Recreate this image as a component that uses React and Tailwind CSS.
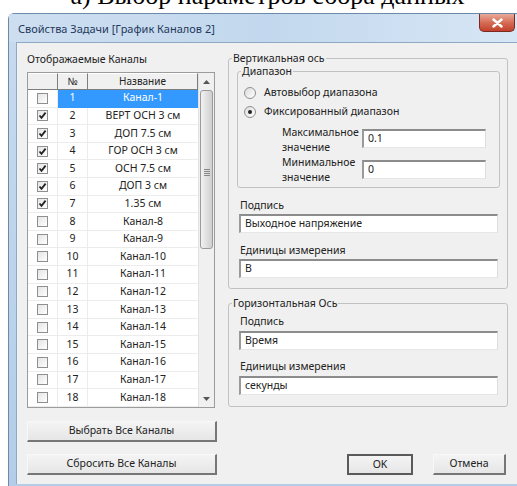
import { useState } from 'react'

const channels = [
  { n: 1, name: 'Канал-1', on: false },
  { n: 2, name: 'ВЕРТ ОСН 3 см', on: true },
  { n: 3, name: 'ДОП 7.5 см', on: true },
  { n: 4, name: 'ГОР ОСН 3 см', on: true },
  { n: 5, name: 'ОСН 7.5 см', on: true },
  { n: 6, name: 'ДОП 3 см', on: true },
  { n: 7, name: '1.35 см', on: true },
  { n: 8, name: 'Канал-8', on: false },
  { n: 9, name: 'Канал-9', on: false },
  { n: 10, name: 'Канал-10', on: false },
  { n: 11, name: 'Канал-11', on: false },
  { n: 12, name: 'Канал-12', on: false },
  { n: 13, name: 'Канал-13', on: false },
  { n: 14, name: 'Канал-14', on: false },
  { n: 15, name: 'Канал-15', on: false },
  { n: 16, name: 'Канал-16', on: false },
  { n: 17, name: 'Канал-17', on: false },
  { n: 18, name: 'Канал-18', on: false },
]

function CheckBox({ checked }) {
  return (
    <div className="w-[11px] h-[11px] border border-[#8f8f8f] bg-gradient-to-br from-[#e4e4e4] to-white flex items-center justify-center">
      {checked && (
        <svg width="9" height="9" viewBox="0 0 9 9">
          <path d="M1.5 4.5 L3.5 6.8 L7.6 1.6" stroke="#222" strokeWidth="1.8" fill="none" />
        </svg>
      )}
    </div>
  )
}

function Radio({ checked }) {
  return (
    <div className="w-[12px] h-[12px] rounded-full border border-[#8e8f8f] bg-gradient-to-br from-[#dcdcdc] to-white flex items-center justify-center">
      {checked && <div className="w-[4px] h-[4px] rounded-full bg-[#222]" />}
    </div>
  )
}

function TextBox({ value, className = '' }) {
  return (
    <div
      className={
        'h-[19px] bg-white border-t-2 border-l-2 border-t-[#8c8c8c] border-l-[#9a9a9a] border-r border-b border-r-[#dedede] border-b-[#e6e6e6] flex items-center pl-[4px] text-[10.5px] text-[#222] ' +
        className
      }
    >
      {value}
    </div>
  )
}

function Button({ children, className = '', strong = false }) {
  return (
    <div
      className={
        'h-[21px] flex items-center justify-center text-[10.5px] text-[#222] bg-gradient-to-b from-[#f4f4f4] to-[#e6e6e6] ' +
        (strong
          ? 'border-2 border-[#5a5a5a] '
          : 'border border-t-[#f8f8f8] border-l-[#f8f8f8] border-r-2 border-b-2 border-r-[#767676] border-b-[#767676] ') +
        className
      }
    >
      {children}
    </div>
  )
}

function Arrow({ up }) {
  return (
    <svg width="7" height="4" viewBox="0 0 7 4">
      <path d={up ? 'M0 4 L3.5 0 L7 4 Z' : 'M0 0 L3.5 4 L7 0 Z'} fill="#555" />
    </svg>
  )
}

function ChannelGrid() {
  const [selected] = useState(1)
  return (
    <div className="w-[188px] h-[336px] border border-[#9c9c9c] bg-white flex">
      <div className="flex-1 flex flex-col overflow-hidden">
        <div className="h-[17px] flex shrink-0 bg-[#f0f0f0] text-[10px] text-[#222]">
          <div className="w-[30px] border-r border-b border-[#7d7d7d] border-t border-t-white" />
          <div className="w-[30px] border-r border-b border-[#7d7d7d] border-t border-t-white flex items-center justify-center">№</div>
          <div className="flex-1 border-r border-b border-[#7d7d7d] border-t border-t-white flex items-center justify-center">Название</div>
        </div>
        {channels.map(c => {
          const sel = c.n === selected
          return (
            <div key={c.n} className="h-[17.6px] flex shrink-0 text-[10.5px] text-[#222]">
              <div className="w-[30px] border-r border-b border-[#ececec] flex items-center justify-center">
                <CheckBox checked={c.on} />
              </div>
              <div
                className={
                  'w-[30px] border-r border-b flex items-center justify-center ' +
                  (sel ? 'bg-[#3399ff] text-white border-[#3399ff]' : 'border-[#ececec]')
                }
              >
                {c.n}
              </div>
              <div
                className={
                  'flex-1 border-b flex items-center justify-center ' +
                  (sel ? 'bg-[#3399ff] text-white border-[#3399ff]' : 'border-[#ececec]')
                }
              >
                {c.name}
              </div>
            </div>
          )
        })}
      </div>
      {/* vertical scroll bar */}
      <div className="w-[16px] flex flex-col bg-[#f0f0f0] border-l border-[#e2e2e2]">
        <div className="h-[17px] flex items-center justify-center shrink-0">
          <Arrow up />
        </div>
        <div className="flex-1 flex flex-col px-[1px]">
          <div className="h-[159px] rounded-[3px] border border-[#9a9a9a] bg-gradient-to-r from-[#f2f2f2] via-[#e0e0e0] to-[#cfcfcf] flex flex-col items-center justify-end pb-[72px] gap-[1px]">
            <div className="w-[6px] h-[1px] bg-[#888]" />
            <div className="w-[6px] h-[1px] bg-[#888]" />
            <div className="w-[6px] h-[1px] bg-[#888]" />
            <div className="w-[6px] h-[1px] bg-[#888]" />
          </div>
        </div>
        <div className="h-[17px] flex items-center justify-center shrink-0">
          <Arrow />
        </div>
      </div>
    </div>
  )
}

function App() {
  return (
    <div className="w-[517px] h-[486px] bg-white overflow-hidden flex flex-col font-['Noto_Sans',sans-serif]">
      {/* figure caption, cut at the top */}
      <div className="h-[13px] shrink-0 overflow-hidden flex items-end justify-center pl-[18px]">
        <span className="font-['Liberation_Serif',serif] text-[26px] leading-[26px] mb-[4px] text-black whitespace-nowrap">
          а) Выбор параметров сбора данных
        </span>
      </div>

      {/* dialog window */}
      <div className="ml-[8px] w-[520px] flex-1 flex flex-col rounded-tl-[6px] border-l border-t border-[#6d89a8] bg-gradient-to-b from-[#c7dbef] to-[#b3cde8]">
        <div className="h-[28px] shrink-0 flex items-start justify-between bg-gradient-to-r from-[#cddef0] via-[#c3d8ee] to-[#d8e7f5]">
          <div className="pl-[9px] pt-[7px] text-[11px] text-[#1e395b] whitespace-nowrap">
            Свойства Задачи [График Каналов 2]
          </div>
          <div className="mr-[13px] w-[36px] h-[18px] rounded-b-[5px] border border-t-0 border-[#7a2a20] bg-gradient-to-b from-[#e8aa9b] via-[#d56c55] to-[#c2402a] flex items-center justify-center">
            <svg width="11" height="10" viewBox="0 0 11 10">
              <path d="M1.5 1.5 L9.5 8.5 M9.5 1.5 L1.5 8.5" stroke="white" strokeWidth="2.4" strokeLinecap="round" />
            </svg>
          </div>
        </div>

        <div className="flex-1 ml-[7px] mb-[2px] border-l border-t border-[#8fa9c4] bg-[#f0f0f0] flex text-[#222]">
          {/* left column: channels */}
          <div className="w-[190px] ml-[10px] pt-[10px] flex flex-col">
            <div className="h-[17px] text-[10.5px] leading-[12px]">Отображаемые Каналы</div>
            <div className="mt-[2px]">
              <ChannelGrid />
            </div>
            <Button className="mt-[13px]">Выбрать Все Каналы</Button>
            <Button className="mt-[12px]">Сбросить Все Каналы</Button>
          </div>

          {/* right column: axes */}
          <div className="w-[280px] ml-[11px] pt-[8px] flex flex-col">
            <fieldset className="border border-[#c2c2c2] rounded-[3px] pb-[10px]">
              <legend className="ml-[3px] px-[1px] text-[10.5px] leading-[14px]">Вертикальная ось</legend>
              <fieldset className="ml-[8px] mr-[7px] border border-[#c2c2c2] rounded-[3px] pb-[8px]">
                <legend className="ml-[3px] px-[1px] text-[10.5px] leading-[12px]">Диапазон</legend>
                <div className="pl-[6px] pt-[7px] flex items-center gap-[8px] h-[25px] text-[10.5px]">
                  <Radio />
                  <span>Автовыбор диапазона</span>
                </div>
                <div className="pl-[6px] mt-[1px] flex items-center gap-[8px] h-[18px] text-[10.5px]">
                  <Radio checked />
                  <span>Фиксированный диапазон</span>
                </div>
                <div className="mt-[8px] h-[19px] flex items-start">
                  <div className="ml-[44px] w-[80px] -mt-[4px] text-[10.5px] leading-[15px]">
                    Максимальное
                    <br />
                    значение
                  </div>
                  <TextBox value="0.1" className="w-[124px]" />
                </div>
                <div className="mt-[12px] h-[19px] flex items-start">
                  <div className="ml-[44px] w-[80px] -mt-[5px] text-[10.5px] leading-[15px]">
                    Минимальное
                    <br />
                    значение
                  </div>
                  <TextBox value="0" className="w-[124px]" />
                </div>
              </fieldset>
              <div className="ml-[11px] mt-[10px] h-[14px] text-[10.5px] leading-[14px]">Подпись</div>
              <TextBox value="Выходное напряжение" className="ml-[10px] mr-[9px] mt-[2px]" />
              <div className="ml-[11px] mt-[10px] h-[14px] text-[10.5px] leading-[14px]">Единицы измерения</div>
              <TextBox value="В" className="ml-[10px] mr-[9px] mt-[2px]" />
            </fieldset>

            <fieldset className="mt-[7px] border border-[#c2c2c2] rounded-[3px] pb-[11px]">
              <legend className="ml-[3px] px-[1px] text-[10.5px] leading-[14px]">Горизонтальная Ось</legend>
              <div className="ml-[11px] mt-[4px] h-[14px] text-[10.5px] leading-[14px]">Подпись</div>
              <TextBox value="Время" className="ml-[10px] mr-[9px] mt-[3px]" />
              <div className="ml-[11px] mt-[9px] h-[14px] text-[10.5px] leading-[14px]">Единицы измерения</div>
              <TextBox value="секунды" className="ml-[10px] mr-[9px] mt-[3px]" />
            </fieldset>

            <div className="mt-[47px] flex justify-end gap-[20px]">
              <Button strong className="w-[66px]">OK</Button>
              <Button className="w-[73px] mr-[2px]">Отмена</Button>
            </div>
          </div>
        </div>
      </div>
    </div>
  )
}

export default App
